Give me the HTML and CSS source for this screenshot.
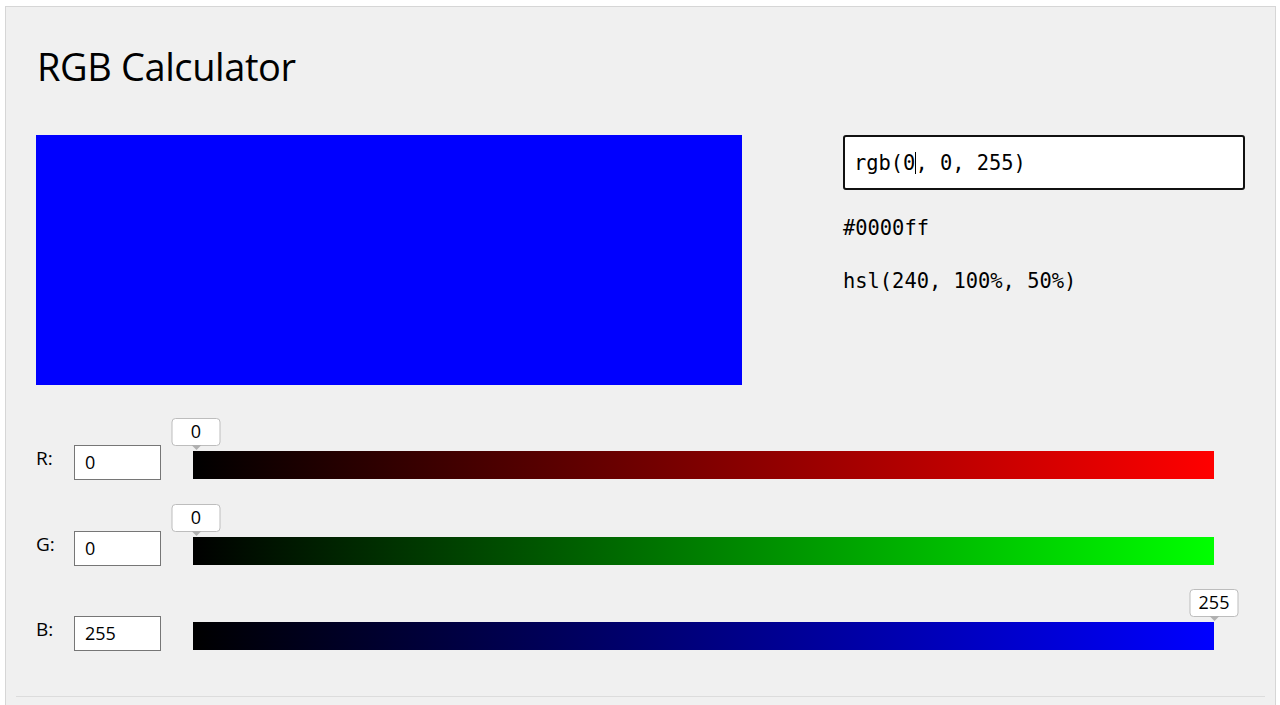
FILE: index.html
```html
<!DOCTYPE html>
<html lang="en">
<head>
<meta charset="utf-8">
<title>RGB Calculator</title>
<link rel="stylesheet" href="styles.css">
</head>
<body>
<div class="app">
  <h1 class="title">RGB Calculator</h1>
  <div class="top">
    <div class="swatch"></div>
    <div class="info">
      <div class="rgb-input"><span>rgb(0</span><span class="caret"></span><span>, 0, 255)</span></div>
      <div class="code">#0000ff</div>
      <div class="code">hsl(240, 100%, 50%)</div>
    </div>
  </div>
  <div class="sliders">
    <div class="row">
      <label class="lbl">R:</label>
      <div class="num">0</div>
      <div class="track track-r">
        <div class="tip" style="left: 3px">0</div>
      </div>
    </div>
    <div class="row">
      <label class="lbl">G:</label>
      <div class="num">0</div>
      <div class="track track-g">
        <div class="tip" style="left: 3px">0</div>
      </div>
    </div>
    <div class="row">
      <label class="lbl">B:</label>
      <div class="num">255</div>
      <div class="track track-b">
        <div class="tip" style="left: 100%">255</div>
      </div>
    </div>
  </div>
  <div class="footer"></div>
</div>
</body>
</html>
```

FILE: styles.css
```css
html, body {
  margin: 0;
  padding: 0;
  background: #ffffff;
}
body {
  padding: 6px 4px 0 5px;
  font-family: "Open Sans", "Noto Sans", sans-serif;
  color: #000;
}
.app {
  background: #f0f0f0;
  border: 1px solid #d6d6d6;
  border-bottom: none;
  padding: 0 30px 0 30px;
  min-height: 720px;
  box-sizing: border-box;
}
.title {
  margin: 0;
  padding-top: 35px;
  font-size: 38px;
  font-weight: 400;
  line-height: 48px;
  padding-left: 1px;
  letter-spacing: -0.4px;
}
.top {
  display: flex;
  margin-top: 45px;
}
.swatch {
  width: 706px;
  height: 250px;
  background: #0000ff;
}
.info {
  margin-left: 101px;
  flex: 1;
}
.rgb-input {
  height: 55px;
  box-sizing: border-box;
  border: 2px solid #111;
  border-radius: 3px;
  background: #fff;
  padding-left: 9px;
  display: flex;
  align-items: center;
  font-family: "DejaVu Sans Mono", "Liberation Mono", monospace;
  font-size: 20.4px;
  white-space: pre;
}
.caret {
  display: inline-block;
  width: 1px;
  height: 22px;
  background: #000;
  margin-right: -1px;
}
.code {
  font-family: "DejaVu Sans Mono", "Liberation Mono", monospace;
  font-size: 20.4px;
  line-height: 24px;
  margin-top: 26px;
}
.code + .code {
  margin-top: 29px;
}
.sliders {
  margin-top: 26px;
  display: flex;
  flex-direction: column;
}
.row {
  display: flex;
  align-items: flex-start;
  padding-top: 34px;
  height: 34px;
  margin-bottom: 17.5px;
}
.lbl {
  width: 38px;
  font-size: 19px;
  line-height: 22px;
  padding-top: 2px;
}
.num {
  width: 87px;
  height: 35px;
  box-sizing: border-box;
  border: 1px solid #767676;
  background: #fff;
  font-size: 18px;
  line-height: 33px;
  padding-left: 10px;
}
.track {
  position: relative;
  flex: 1;
  height: 28px;
  margin: 6px 31px 0 32px;
}
.track-r { background: linear-gradient(to right, #000000, #ff0000); }
.track-g { background: linear-gradient(to right, #000000, #00ff00); }
.track-b { background: linear-gradient(to right, #000000, #0000ff); }
.tip {
  position: absolute;
  bottom: 33px;
  transform: translateX(-50%);
  width: 49px;
  height: 28px;
  box-sizing: border-box;
  background: #fff;
  border: 1px solid #bdbdbd;
  border-radius: 4px;
  font-size: 18px;
  line-height: 25px;
  text-align: center;
}
.tip::after {
  content: "";
  position: absolute;
  left: 50%;
  top: 100%;
  margin-left: -5px;
  border-left: 5px solid transparent;
  border-right: 5px solid transparent;
  border-top: 5px solid #b0b0b0;
}
.footer {
  margin: 28px -20px 0 -20px;
  border-top: 1px solid #dcdcdc;
}
```
